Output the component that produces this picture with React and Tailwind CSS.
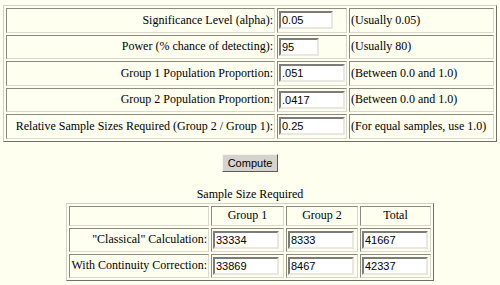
import React from "react";

const serif = { fontFamily: '"Liberation Serif", "Times New Roman", serif' };

const cell =
  "whitespace-nowrap border border-solid border-t-[#8a8a80] border-l-[#8a8a80] border-b-[#d8d8cc] border-r-[#d8d8cc] p-[1px] align-middle";
const tableCls =
  "border-separate border-spacing-[2px] border border-solid border-t-[#d0d0c4] border-l-[#d0d0c4] border-b-[#707068] border-r-[#707068]";
const inputCls =
  "block h-[18px] bg-white border-2 border-solid border-t-[#7c7c78] border-l-[#7c7c78] border-b-[#e8e8e0] border-r-[#e8e8e0] px-[1px] text-[11px] leading-[14px] text-black font-['Liberation_Sans',Arial,sans-serif] outline-none";

function Row({ label, value, w, note }) {
  return (
    <tr className="h-[24.5px]">
      <td className={cell + " text-right pr-[1px]"}>{label}</td>
      <td className={cell + " pl-[1px]"}>
        <input className={inputCls} style={{ width: w }} defaultValue={value} readOnly />
      </td>
      <td className={cell + " text-left pl-[1px]"}>{note}</td>
    </tr>
  );
}

function ResRow({ label, a, b, c }) {
  return (
    <tr className="h-[24px]">
      <td className={cell + " text-right"}>{label}</td>
      <td className={cell + " pl-[1px]"}>
        <input className={inputCls + " w-[66px]"} defaultValue={a} readOnly />
      </td>
      <td className={cell + " pl-[1px]"}>
        <input className={inputCls + " w-[66px]"} defaultValue={b} readOnly />
      </td>
      <td className={cell + " pl-[1px]"}>
        <input className={inputCls + " w-[66px]"} defaultValue={c} readOnly />
      </td>
    </tr>
  );
}

export default function App() {
  return (
    <div
      className="w-[500px] h-[285px] bg-[#fffff0] text-black text-[12px] leading-[15px] pl-[3px] pt-[5px] overflow-hidden"
      style={serif}
    >
      <table className={tableCls + " w-[494px]"}>
        <colgroup>
          <col className="w-[269px]" />
          <col className="w-[70px]" />
          <col />
        </colgroup>
        <tbody>
          <Row label="Significance Level (alpha):" value="0.05" w={54} note="(Usually 0.05)" />
          <Row label="Power (% chance of detecting):" value="95" w={40} note="(Usually 80)" />
          <Row label="Group 1 Population Proportion:" value=".051" w={66} note="(Between 0.0 and 1.0)" />
          <Row label="Group 2 Population Proportion:" value=".0417" w={66} note="(Between 0.0 and 1.0)" />
          <Row
            label="Relative Sample Sizes Required (Group 2 / Group 1):"
            value="0.25"
            w={66}
            note="(For equal samples, use 1.0)"
          />
        </tbody>
      </table>

      <div className="flex justify-center mt-[12px] pr-[3px]">
        <button className="w-[56px] h-[18px] bg-[#d6d3cc] border border-solid border-t-[#f4f4f0] border-l-[#f4f4f0] border-b-[#5a5a58] border-r-[#5a5a58] text-[11px] leading-[14px] text-black font-['Liberation_Sans',Arial,sans-serif]">
          Compute
        </button>
      </div>

      <div className="text-center mt-[15px] pr-[3px] leading-[15px]">Sample Size Required</div>

      <div className="flex justify-center pr-[3px] mt-[1px]">
        <table className={tableCls + " w-[368px]"}>
          <colgroup>
            <col className="w-[140px]" />
            <col className="w-[73px]" />
            <col className="w-[72px]" />
            <col />
          </colgroup>
          <tbody>
            <tr className="h-[20px]">
              <td className={cell}></td>
              <td className={cell + " text-center"}>Group 1</td>
              <td className={cell + " text-center"}>Group 2</td>
              <td className={cell + " text-center"}>Total</td>
            </tr>
            <ResRow label={'"Classical" Calculation:'} a="33334" b="8333" c="41667" />
            <ResRow label="With Continuity Correction:" a="33869" b="8467" c="42337" />
          </tbody>
        </table>
      </div>
    </div>
  );
}
